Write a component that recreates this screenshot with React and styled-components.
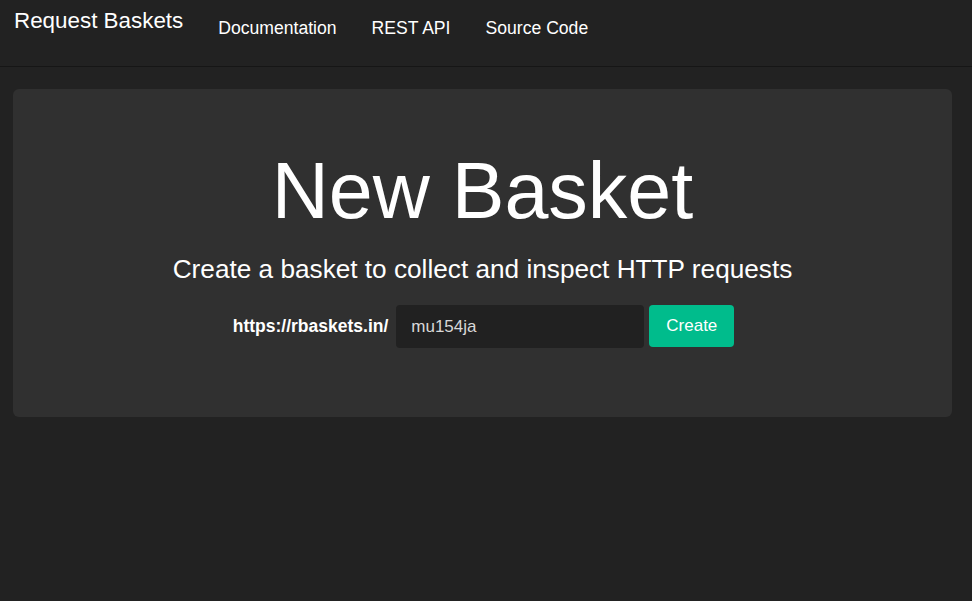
import React from "react";
import styled, { createGlobalStyle } from "styled-components";

const GlobalStyle = createGlobalStyle`
  html, body {
    margin: 0;
    padding: 0;
    background: #222222;
    color: #ffffff;
    font-family: "Liberation Sans", Arial, sans-serif;
  }
`;

const Page = styled.div`
  min-height: 601px;
  background: #222222;
`;

const Navbar = styled.nav`
  height: 67px;
  box-sizing: border-box;
  border-bottom: 1px solid #161616;
  display: flex;
  align-items: flex-start;
  padding: 0 14px;
`;

const Brand = styled.a`
  font-size: 22.4px;
  color: #ffffff;
  text-decoration: none;
  margin-top: 8px;
  margin-right: 35px;
`;

const NavLink = styled.a`
  font-size: 17.6px;
  color: #ffffff;
  text-decoration: none;
  margin-top: 18px;
  margin-right: 35px;
`;

const Container = styled.div`
  padding: 22px 20px 0 13px;
`;

const Jumbotron = styled.div`
  background: #303030;
  border-radius: 6px;
  height: 328px;
  box-sizing: border-box;
  display: flex;
  flex-direction: column;
  align-items: center;
  padding-top: 62px;
`;

const Title = styled.h1`
  margin: 0;
  font-size: 79px;
  font-weight: normal;
  line-height: 1;
  color: #ffffff;
`;

const Lead = styled.p`
  margin: 24px 0 0;
  font-size: 26.2px;
  line-height: 1.2;
  color: #ffffff;
`;

const Form = styled.form`
  display: flex;
  align-items: flex-start;
  margin-top: 20px;
  padding-left: 2px;
`;

const Label = styled.label`
  font-size: 17.5px;
  font-weight: bold;
  color: #ffffff;
  margin-top: 11px;
  margin-right: 8px;
`;

const Input = styled.input`
  width: 248px;
  height: 43px;
  box-sizing: border-box;
  background: #212121;
  border: none;
  border-radius: 4px;
  padding: 0 15px;
  color: #d8d8d8;
  font-family: "Liberation Sans", Arial, sans-serif;
  font-size: 17px;
  outline: none;
`;

const Button = styled.button`
  margin-left: 5px;
  width: 85px;
  height: 42px;
  background: #00bc8c;
  border: none;
  border-radius: 4px;
  color: #ffffff;
  font-family: "Liberation Sans", Arial, sans-serif;
  font-size: 17px;
  cursor: pointer;
`;

export default function App() {
  return (
    <Page>
      <GlobalStyle />
      <Navbar>
        <Brand href="#">Request Baskets</Brand>
        <NavLink href="#">Documentation</NavLink>
        <NavLink href="#">REST API</NavLink>
        <NavLink href="#">Source Code</NavLink>
      </Navbar>
      <Container>
        <Jumbotron>
          <Title>New Basket</Title>
          <Lead>Create a basket to collect and inspect HTTP requests</Lead>
          <Form onSubmit={e => e.preventDefault()}>
            <Label>https://rbaskets.in/</Label>
            <Input defaultValue="mu154ja" />
            <Button type="submit">Create</Button>
          </Form>
        </Jumbotron>
      </Container>
    </Page>
  );
}
